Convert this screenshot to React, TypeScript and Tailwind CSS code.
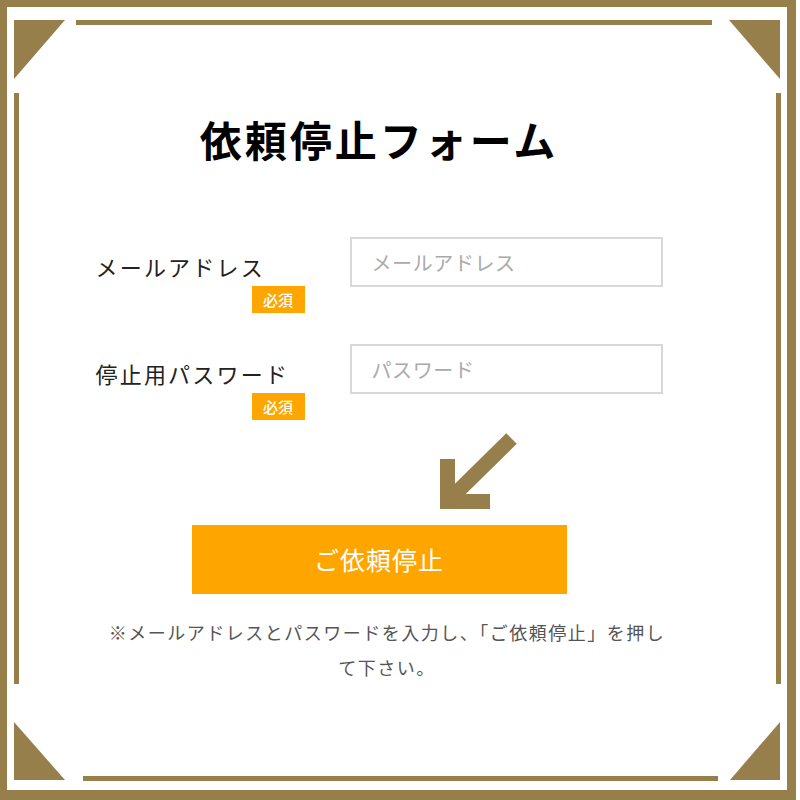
import React from "react";

const GOLD = "#977f4c";

function Frame() {
  return (
    <svg
      className="pointer-events-none absolute -left-[7px] -top-[7px]"
      width="796"
      height="800"
      viewBox="0 0 796 800"
    >
      <g fill={GOLD}>
        <polygon points="14,20 65,20 14,79" />
        <polygon points="729,20 780,20 780,79" />
        <polygon points="14,722 14,780 65,780" />
        <polygon points="780,722 780,780 730,780" />
        <rect x="76" y="20" width="636" height="5" />
        <rect x="83" y="776" width="635" height="5" />
        <rect x="14" y="93" width="5" height="591" />
        <rect x="776" y="93" width="5" height="591" />
      </g>
    </svg>
  );
}

function Row({ label, placeholder, type }: { label: string; placeholder: string; type: string }) {
  return (
    <div className="flex items-start">
      <div className="flex w-[209px] flex-col pt-[14px]">
        <div className="text-[22px] leading-[30px] tracking-[2.2px] text-[#222]">{label}</div>
        <div className="mt-[5px] flex h-[27px] w-[53px] items-center justify-center self-end bg-[#ffa500] text-[15px] font-medium leading-none text-white">
          必須
        </div>
      </div>
      <input
        type={type}
        placeholder={placeholder}
        className="ml-[45px] h-[50px] w-[313px] border-2 border-[#d8d8d8] bg-white pl-[20px] text-[20px] tracking-[0.6px] text-[#333] outline-none placeholder:text-[#aaaaaa]"
      />
    </div>
  );
}

export default function App() {
  return (
    <div
      className="relative h-[800px] w-[796px] border-b-[10px] border-l-[7px] border-r-[9px] border-t-[7px] bg-white"
      style={{ borderColor: GOLD, fontFamily: '"Noto Sans CJK JP", "Noto Sans", sans-serif' }}
    >
      <Frame />
      <div className="flex flex-col items-center pr-[36px] pt-[108px]">
        <h1 className="text-[42px] font-bold leading-[48px] tracking-[3px] text-black">依頼停止フォーム</h1>
        <div className="mt-[74px] flex w-[567px] flex-col gap-[31px]">
          <Row label="メールアドレス" placeholder="メールアドレス" type="email" />
          <Row label="停止用パスワード" placeholder="パスワード" type="password" />
        </div>
        <div className="w-[567px]">
          <svg className="ml-[342px] mt-[12px] block" width="80" height="80" viewBox="0 0 80 80">
            <path
              d="M 9.5 27 L 9.5 69.5 L 52 69.5"
              fill="none"
              stroke={GOLD}
              strokeWidth="15"
              strokeLinejoin="miter"
              strokeLinecap="butt"
            />
            <path d="M 9.5 69.5 L 73.5 6.5" fill="none" stroke={GOLD} strokeWidth="15" strokeLinecap="butt" />
          </svg>
        </div>
        <button className="mt-[13px] flex h-[69px] w-[375px] items-center justify-center bg-[#ffa500] text-[25px] tracking-[1px] text-white">
          ご依頼停止
        </button>
        <div className="mt-[21px] w-[588px] pl-[16px]">
          <p className="text-center text-[18px] leading-[35px] tracking-[1.5px] text-[#555]">
            ※メールアドレスとパスワードを入力し、「ご依頼停止」を押して下さい。
          </p>
        </div>
      </div>
    </div>
  );
}
